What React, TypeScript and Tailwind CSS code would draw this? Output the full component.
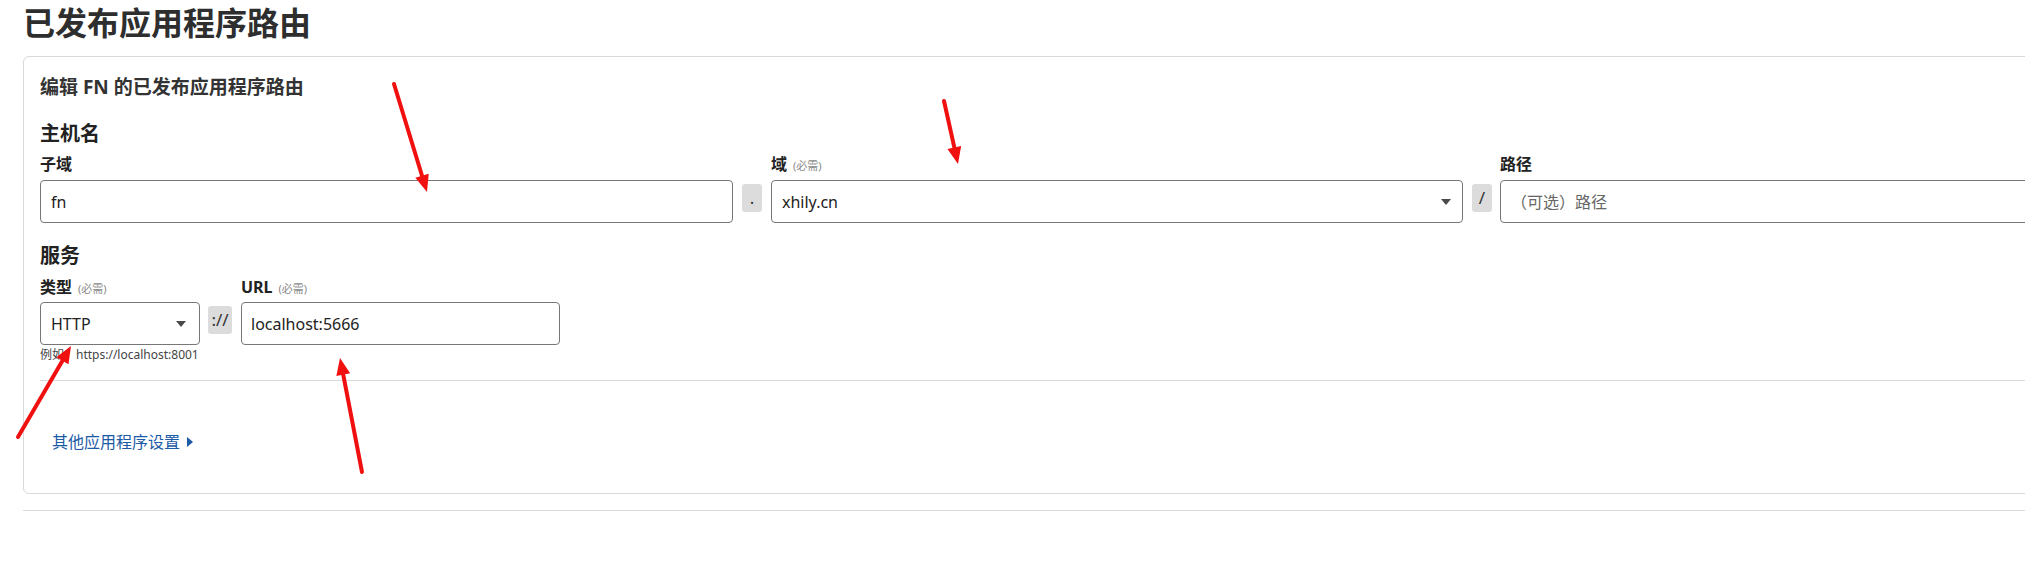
import React from "react";

type Pt = [number, number];

// red hand-drawn annotation arrows on the screenshot
const arrows: [Pt, Pt][] = [
  [[394, 84], [427, 192]],
  [[944, 101], [958, 164]],
  [[18, 437], [71, 346]],
  [[362, 472], [340, 358]],
];

const Arrow = ({ from, to }: { from: Pt; to: Pt }) => {
  const dx = to[0] - from[0];
  const dy = to[1] - from[1];
  const len = Math.hypot(dx, dy);
  const ux = dx / len;
  const uy = dy / len;
  const bx = to[0] - ux * 17;
  const by = to[1] - uy * 17;
  const px = -uy * 7;
  const py = ux * 7;
  return (
    <g>
      <line x1={from[0]} y1={from[1]} x2={bx} y2={by} stroke="#f01010" strokeWidth={4} strokeLinecap="round" />
      <polygon points={`${to[0]},${to[1]} ${bx + px},${by + py} ${bx - px},${by - py}`} fill="#f01010" />
    </g>
  );
};

const Caret = () => (
  <svg width="10" height="6" viewBox="0 0 10 6" className="shrink-0">
    <path d="M0 0h10L5 6z" fill="#4a4a4a" />
  </svg>
);

const Label = ({ text, required }: { text: string; required?: boolean }) => (
  <div className="flex items-baseline h-[24px] leading-[24px]">
    <span className="text-[16px] font-semibold text-[#222]">{text}</span>
    {required && <span className="ml-1.5 text-[11px] text-[#8a8a8a]">(必需)</span>}
  </div>
);

const Sep = ({ text, w, top }: { text: string; w: string; top: string }) => (
  <div
    className={`${w} ${top} h-[28px] shrink-0 rounded-[3px] bg-[#dcdcdc] flex items-center justify-center text-[17px] text-[#333]`}
  >
    {text}
  </div>
);

export default function App() {
  return (
    <div className="relative w-[2025px] h-[579px] overflow-hidden bg-white text-[#333] font-['Noto_Sans','Noto_Sans_CJK_SC',sans-serif]">
      <div className="w-[2250px] pl-[23px]">
        <h1 className="text-[32px] leading-[45px] font-bold text-[#2e2e2e]">已发布应用程序路由</h1>

        <div className="mt-[11px] rounded-md border border-[#d9d9d9] px-4 pt-4 pb-[39px]">
          <h2 className="text-[19px] leading-[28px] font-bold text-[#333]">编辑 FN 的已发布应用程序路由</h2>

          <h3 className="mt-[19px] text-[20px] leading-[28px] font-bold text-[#222]">主机名</h3>
          <div className="mt-1 flex items-start">
            <div className="w-[693px] shrink-0">
              <Label text="子域" />
              <div className="mt-1 h-[43px] rounded border border-[#777] px-[10px] flex items-center text-[16px] text-[#222]">
                fn
              </div>
            </div>
            <div className="ml-[9px] mr-[9px]">
              <Sep text="." w="w-[20px]" top="mt-[32px]" />
            </div>
            <div className="w-[692px] shrink-0">
              <Label text="域" required />
              <div className="mt-1 h-[43px] rounded border border-[#777] pl-[10px] pr-[11px] flex items-center justify-between text-[16px] text-[#222]">
                <span>xhily.cn</span>
                <Caret />
              </div>
            </div>
            <div className="ml-[9px] mr-[8px]">
              <Sep text="/" w="w-[20px]" top="mt-[32px]" />
            </div>
            <div className="w-[693px] shrink-0">
              <Label text="路径" />
              <div className="mt-1 h-[43px] rounded border border-[#777] px-[10px] flex items-center text-[16px] text-[#666]">
                （可选）路径
              </div>
            </div>
          </div>

          <h3 className="mt-[19px] text-[20px] leading-[28px] font-bold text-[#222]">服务</h3>
          <div className="mt-[5px] flex items-start">
            <div className="w-[160px] shrink-0">
              <Label text="类型" required />
              <div className="mt-[3px] h-[43px] rounded border border-[#777] pl-[10px] pr-[13px] flex items-center justify-between text-[16px] text-[#222]">
                <span>HTTP</span>
                <Caret />
              </div>
              <div className="mt-[3px] h-[14px] leading-[14px] text-[12px] text-[#444] whitespace-nowrap">
                例如：https://localhost:8001
              </div>
            </div>
            <div className="ml-[8px] mr-[9px]">
              <Sep text="://" w="w-[24px]" top="mt-[31px]" />
            </div>
            <div className="w-[319px] shrink-0">
              <div className="flex items-baseline h-[24px] leading-[24px]">
                <span className="text-[16px] font-bold text-[#222]">URL</span>
                <span className="ml-1.5 text-[11px] text-[#8a8a8a]">(必需)</span>
              </div>
              <div className="mt-[3px] h-[43px] rounded border border-[#777] px-[9px] flex items-center text-[16px] text-[#222]">
                localhost:5666
              </div>
            </div>
          </div>

          <div className="mt-[18px] border-t border-[#d9d9d9]" />

          <button className="mt-[49px] ml-[12px] flex items-center gap-[7px] h-[24px] text-[16px] leading-[24px] text-[#1a5aa6]">
            <span>其他应用程序设置</span>
            <svg width="6" height="10" viewBox="0 0 6 10">
              <path d="M0 0l6 5-6 5z" fill="#1a5aa6" />
            </svg>
          </button>
        </div>

        <div className="mt-[16px] border-t border-[#d9d9d9]" />
      </div>

      <svg className="absolute inset-0 pointer-events-none" width="2025" height="579">
        {arrows.map(([a, b], i) => (
          <Arrow key={i} from={a} to={b} />
        ))}
      </svg>
    </div>
  );
}
